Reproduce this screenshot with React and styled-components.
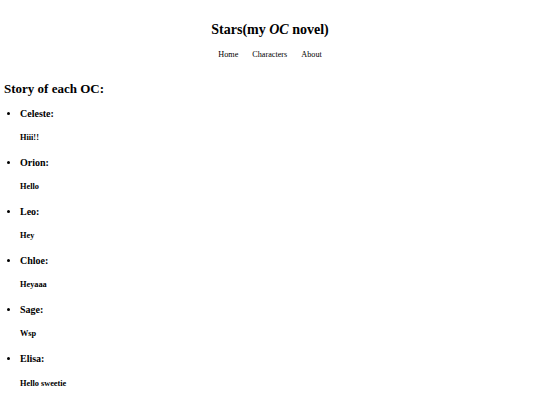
import React from "react";
import styled, { createGlobalStyle } from "styled-components";

const GlobalStyle = createGlobalStyle`
  html, body {
    margin: 0;
    padding: 0;
    background: #fff;
  }
  body {
    font-family: "Liberation Serif", "Times New Roman", serif;
    color: #000;
  }
`;

const characters = [
  { name: "Celeste:", story: "Hiii!!" },
  { name: "Orion:", story: "Hello" },
  { name: "Leo:", story: "Hey" },
  { name: "Chloe:", story: "Heyaaa" },
  { name: "Sage:", story: "Wsp" },
  { name: "Elisa:", story: "Hello sweetie" },
];

const App = () => {
  return (
    <>
      <GlobalStyle />
      <Page>
        <Header>
          <Title>
            Stars(my <i>OC</i> novel)
          </Title>
          <Nav>
            <NavLink href="#">Home</NavLink>
            <NavLink href="#">Characters</NavLink>
            <NavLink href="#">About</NavLink>
          </Nav>
        </Header>

        <Section>
          <SectionTitle>Story of each OC:</SectionTitle>
          <List>
            {characters.map((c) => (
              <Item key={c.name}>
                <Name>{c.name}</Name>
                <Story>{c.story}</Story>
              </Item>
            ))}
          </List>
        </Section>
      </Page>
    </>
  );
};

const Page = styled.div`
  padding: 0 4px;
`;

const Header = styled.header`
  display: flex;
  flex-direction: column;
  align-items: center;
  padding-top: 22px;
  gap: 12px;
`;

const Title = styled.h1`
  margin: 0;
  font-size: 14px;
  line-height: 16px;
  font-weight: bold;
`;

const Nav = styled.nav`
  display: flex;
  gap: 14px;
`;

const NavLink = styled.a`
  font-size: 8.2px;
  line-height: 10px;
  color: #000;
  text-decoration: none;
`;

const Section = styled.section`
  margin-top: 21px;
`;

const SectionTitle = styled.h2`
  margin: 0;
  font-size: 13px;
  line-height: 15px;
  font-weight: bold;
`;

const List = styled.ul`
  margin: 11.5px 0 0;
  padding-left: 16px;
  display: flex;
  flex-direction: column;
  gap: 14px;
`;

const Item = styled.li`
  display: list-item;
  font-size: 10px;
`;

const Name = styled.h3`
  margin: 0;
  font-size: 10px;
  line-height: 11px;
  font-weight: bold;
`;

const Story = styled.p`
  margin: 14.2px 0 0;
  font-size: 8.3px;
  line-height: 10px;
  font-weight: bold;
`;

export default App;
